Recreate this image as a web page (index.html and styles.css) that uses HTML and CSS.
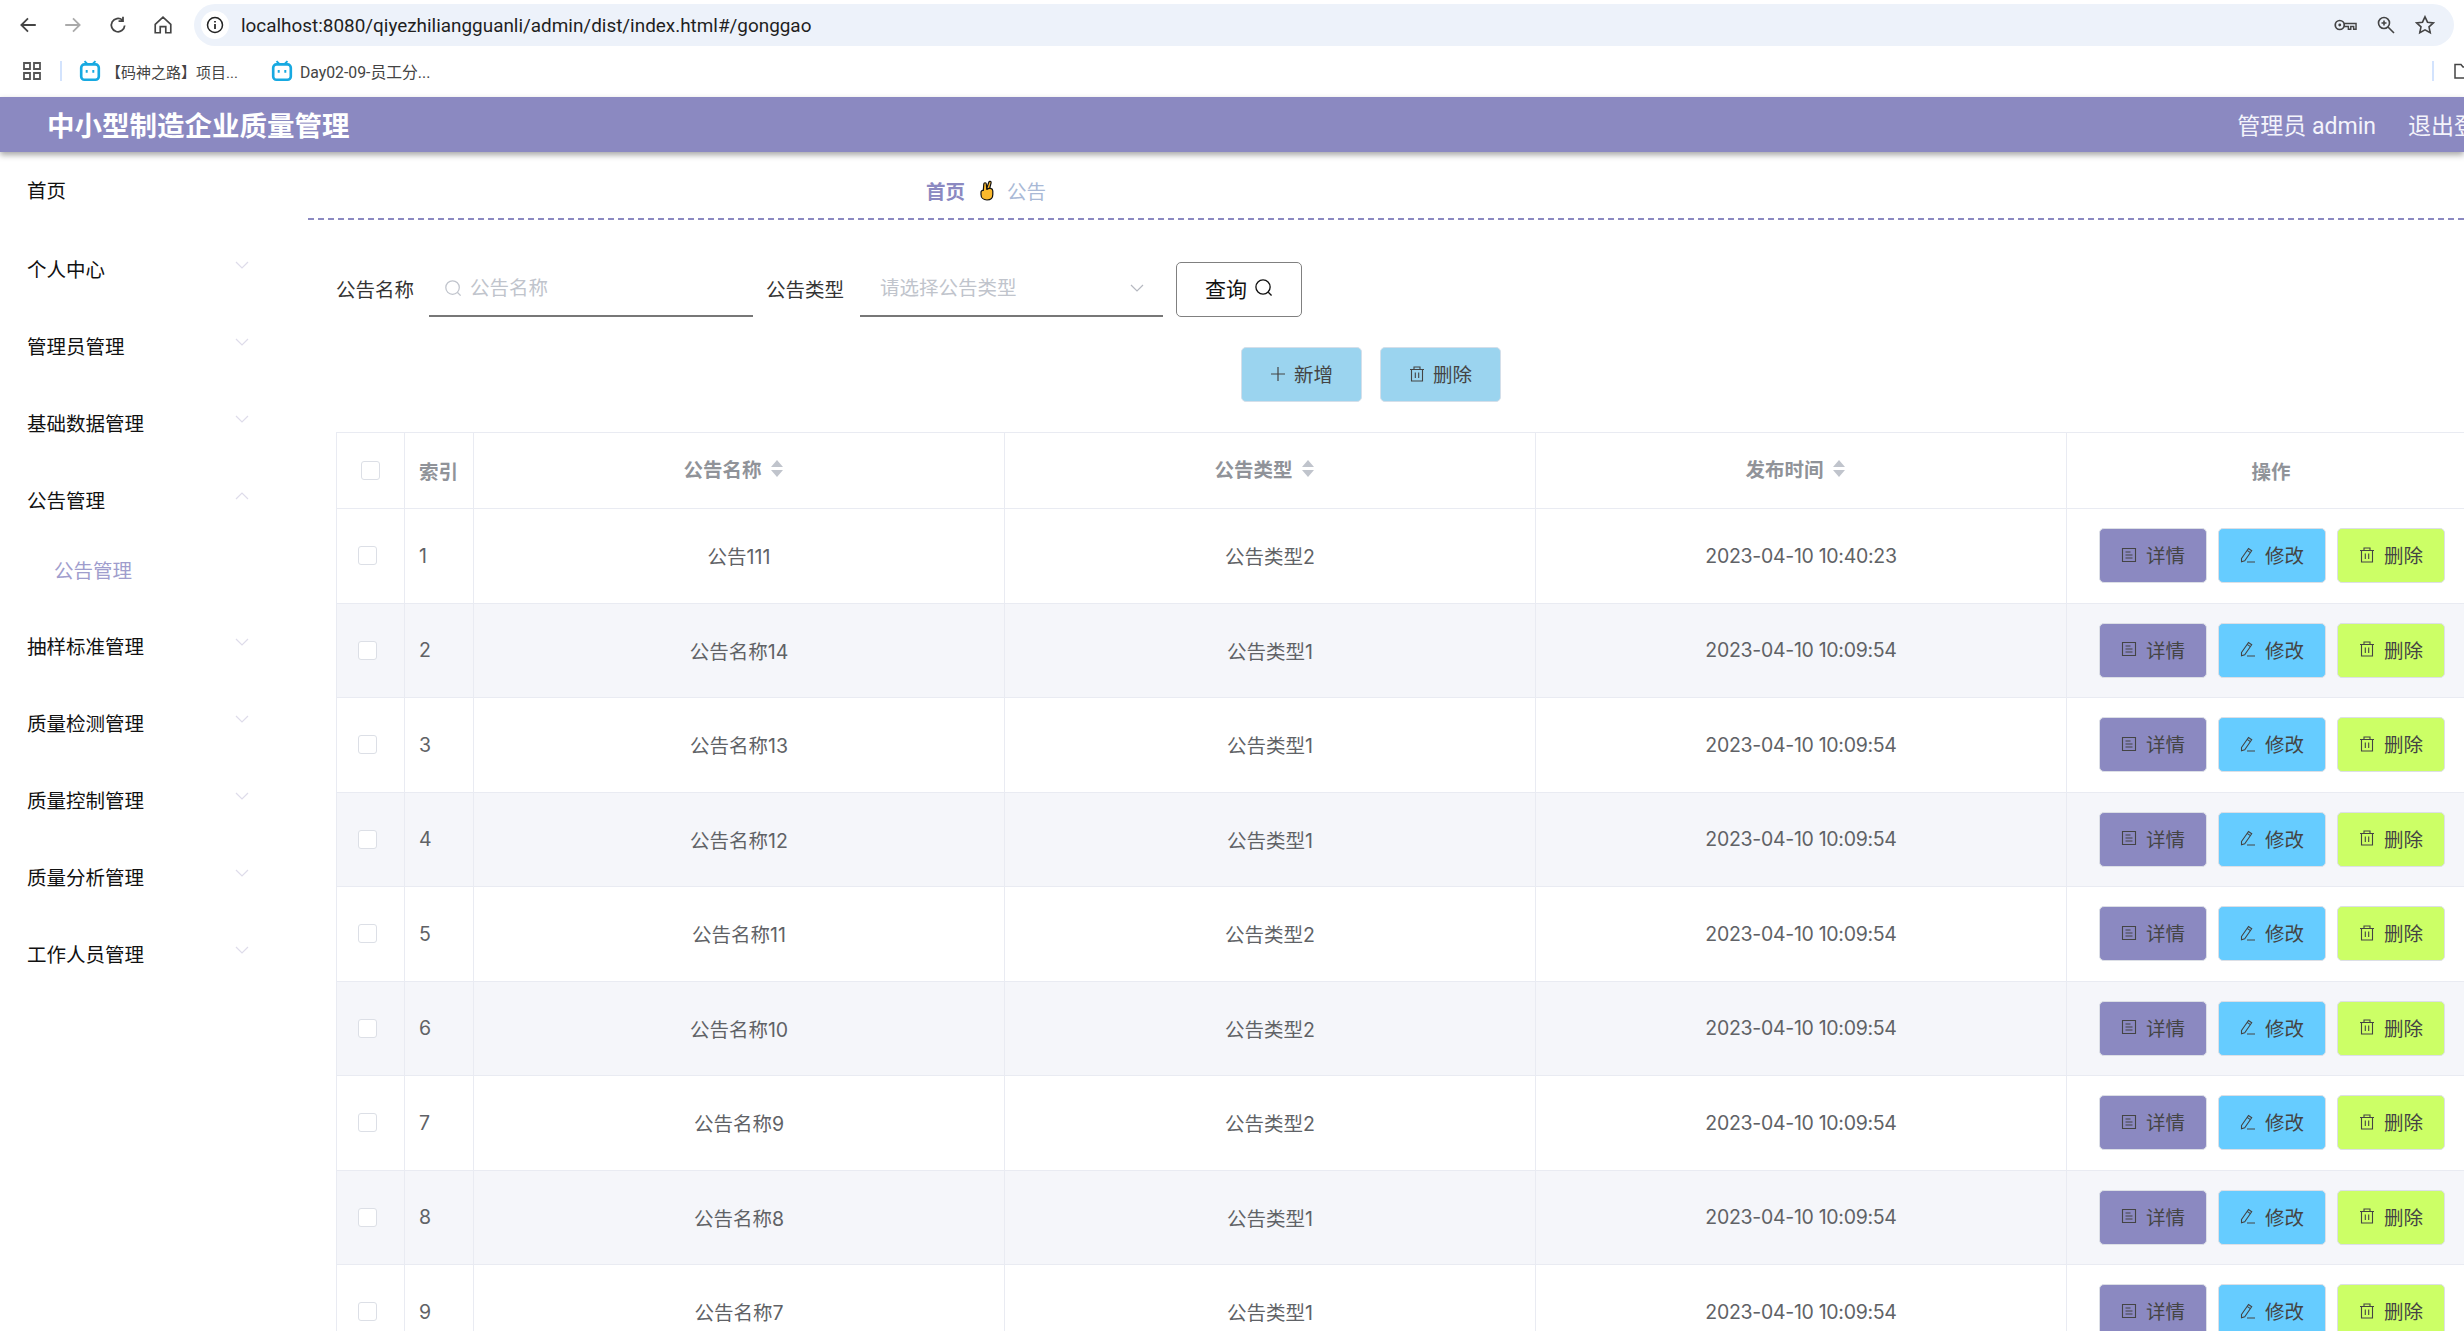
FILE: index.html
```html
<!DOCTYPE html>
<html lang="zh-CN">
<head>
  <meta charset="UTF-8">
  <title>中小型制造企业质量管理</title>
  <link rel="stylesheet" href="styles.css">
</head>
<body>
  <svg class="icon-defs" width="0" height="0">
    <symbol id="i-search" viewBox="0 0 20 20"><circle cx="9.5" cy="9.5" r="7.5" fill="none" stroke="currentColor" stroke-width="1.4"/><path d="M15 15l3.5 3.5" fill="none" stroke="currentColor" stroke-width="1.4"/></symbol>
    <symbol id="i-doc" viewBox="0 0 16 16"><path d="M1.5 1.5h13v13h-13zM4.5 5h5M4.5 8h7M4.5 11h7" fill="none" stroke="currentColor" stroke-width="1.1"/></symbol>
    <symbol id="i-edit" viewBox="0 0 16 16"><path d="M1.5 11.5L8.5 1.5l3.2 2.2-7 10-3.2 1zM7.2 3.4l3.2 2.2M7 15h8" fill="none" stroke="currentColor" stroke-width="1.1"/></symbol>
    <symbol id="i-trash" viewBox="0 0 16 16"><path d="M1 3.5h14M5 3.5V1h6v2.5M2.5 3.5V15h11V3.5M6.3 6.5v5.5M9.7 6.5v5.5" fill="none" stroke="currentColor" stroke-width="1.1"/></symbol>
    <symbol id="i-plus" viewBox="0 0 16 16"><path d="M8 1v14M1 8h14" fill="none" stroke="currentColor" stroke-width="1.2"/></symbol>
    <symbol id="i-bili" viewBox="0 0 20 20"><path d="M5 1l3 3M15 1l-3 3" stroke="#17a9e1" stroke-width="1.8" fill="none"/><rect x="2" y="4" width="16" height="14" rx="3" fill="#fff" stroke="#17a9e1" stroke-width="2.4"/><path d="M7 9v2.5M13 9v2.5" stroke="#17a9e1" stroke-width="1.8"/></symbol>
    <symbol id="i-down" viewBox="0 0 14 8"><path d="M1 1l6 6 6-6" fill="none" stroke="currentColor" stroke-width="1.2"/></symbol>
    <symbol id="i-up" viewBox="0 0 14 8"><path d="M1 7l6-6 6 6" fill="none" stroke="currentColor" stroke-width="1.2"/></symbol>
  </svg>

  <div class="browser-bar">
    <svg class="tool-icon" viewBox="0 0 18 18"><path d="M16 9H3M9 3L3 9l6 6" fill="none" stroke="#444" stroke-width="1.6"/></svg>
    <svg class="tool-icon muted" viewBox="0 0 18 18"><path d="M2 9h13M9 3l6 6-6 6" fill="none" stroke="#aaa" stroke-width="1.6"/></svg>
    <svg class="tool-icon" viewBox="0 0 18 18"><path d="M15 9.5A6 6 0 1 1 13 4.6M13.5 1.5v4h-4" fill="none" stroke="#444" stroke-width="1.6"/></svg>
    <svg class="tool-icon" viewBox="0 0 18 18"><path d="M2 8.5L9 2l7 6.500V16h-4.500v-5.500h-5V16H2z" fill="none" stroke="#444" stroke-width="1.500"/></svg>
    <div class="address">
      <span class="info-dot"><svg viewBox="0 0 18 18" width="18" height="18"><circle cx="9" cy="9" r="7.500" fill="none" stroke="#222" stroke-width="1.500"/><path d="M9 8v5M9 5v1.600" stroke="#222" stroke-width="1.700"/></svg></span>
      <span class="url">localhost:8080/qiyezhiliangguanli/admin/dist/index.html#/gonggao</span>
      <div class="address-tools">
        <svg viewBox="0 0 24 14" width="23" height="14"><circle cx="6" cy="7" r="4.700" fill="none" stroke="#444" stroke-width="1.800"/><circle cx="6" cy="7" r="1.500" fill="#444"/><path d="M10.500 5.500H23v6h-2.500V8.500h-3v3H15V8.500h-4.500" fill="none" stroke="#444" stroke-width="1.500"/></svg>
        <svg viewBox="0 0 18 18" width="18" height="18"><circle cx="7" cy="7" r="5.500" fill="none" stroke="#444" stroke-width="1.600"/><path d="M11 11l6 6M4.500 7h5M7 4.500v5" fill="none" stroke="#444" stroke-width="1.600"/></svg>
        <svg viewBox="0 0 20 20" width="20" height="20"><path d="M10 1.800l2.500 5.400 5.900.7-4.400 4 1.200 5.800-5.200-2.900-5.200 2.900L6 11.900l-4.400-4 5.900-.7z" fill="none" stroke="#444" stroke-width="1.600"/></svg>
      </div>
    </div>
  </div>

  <div class="bookmarks">
    <svg class="apps" viewBox="0 0 18 18" width="18" height="18"><path d="M1 1h6v6H1zM11 1h6v6h-6zM1 11h6v6H1zM11 11h6v6h-6z" fill="none" stroke="#555" stroke-width="1.800"/></svg>
    <span class="bm-sep"></span>
    <a class="bookmark"><svg class="bili"><use href="#i-bili"/></svg>【码神之路】项目...</a>
    <a class="bookmark"><svg class="bili"><use href="#i-bili"/></svg><span class="bm-latin">Day02-09-员工分...</span></a>
    <span class="bm-sep bm-sep-right"></span>
    <svg class="folder" viewBox="0 0 18 16" width="18" height="16"><path d="M1 1.500h6l2 2.500h8v11H1z" fill="none" stroke="#444" stroke-width="1.500"/></svg>
  </div>

  <header class="app-header">
    <div class="app-title">中小型制造企业质量管理</div>
    <div class="app-user">管理员 admin</div>
    <div class="app-logout">退出登录</div>
  </header>

  <div class="layout">
    <nav class="sidebar">
      <div class="menu-item menu-home">首页</div>
      <div class="menu-item">个人中心<svg class="chev"><use href="#i-down"/></svg></div>
      <div class="menu-item">管理员管理<svg class="chev"><use href="#i-down"/></svg></div>
      <div class="menu-item">基础数据管理<svg class="chev"><use href="#i-down"/></svg></div>
      <div class="menu-item">公告管理<svg class="chev"><use href="#i-up"/></svg></div>
      <div class="menu-sub">公告管理</div>
      <div class="menu-item">抽样标准管理<svg class="chev"><use href="#i-down"/></svg></div>
      <div class="menu-item">质量检测管理<svg class="chev"><use href="#i-down"/></svg></div>
      <div class="menu-item">质量控制管理<svg class="chev"><use href="#i-down"/></svg></div>
      <div class="menu-item">质量分析管理<svg class="chev"><use href="#i-down"/></svg></div>
      <div class="menu-item">工作人员管理<svg class="chev"><use href="#i-down"/></svg></div>
    </nav>

    <main class="main">
      <div class="crumb">
        <span class="crumb-home">首页</span>
        <svg class="crumb-hand" viewBox="0 0 14 21" width="14" height="21">
          <path d="M6.500 9L8.800 2.200C9.300.8 11.500 1.300 11.100 2.900L9.500 9z" fill="#fbb92c" stroke="#111" stroke-width="1.200" stroke-linejoin="round"/>
          <path d="M3.300 10.500L3.800 4C3.900 2.300 6.300 2.400 6.300 4L6.800 9.500C9 7.500 12.800 8 12.800 11V14.500C12.800 18 10.500 20 7 20 3.300 20 1 17.500 1 14.500V12.300C1 10.800 2.300 10.200 3.300 10.500z" fill="#fbb92c" stroke="#111" stroke-width="1.200" stroke-linejoin="round"/>
        </svg>
        <span class="crumb-cur">公告</span>
      </div>

      <div class="content">
        <form class="search">
          <label class="search-label">公告名称</label>
          <div class="field field-name">
            <svg class="field-icon"><use href="#i-search"/></svg>
            <input type="text" placeholder="公告名称">
          </div>
          <label class="search-label">公告类型</label>
          <div class="field field-type">
            <input type="text" placeholder="请选择公告类型" readonly>
            <svg class="field-chev"><use href="#i-down"/></svg>
          </div>
          <button type="button" class="btn-query">查询<svg><use href="#i-search"/></svg></button>
        </form>

        <div class="actions">
          <button type="button" class="btn-light"><svg><use href="#i-plus"/></svg>新增</button>
          <button type="button" class="btn-light"><svg><use href="#i-trash"/></svg>删除</button>
        </div>

        <table class="grid">
          <colgroup>
            <col class="col-check"><col class="col-index"><col class="col-text"><col class="col-text"><col class="col-text"><col class="col-ops">
          </colgroup>
          <thead>
            <tr>
              <th class="cell-check"><span class="check"></span></th>
              <th class="cell-index">索引</th>
              <th><div class="sortable">公告名称<span class="carets"><i class="up"></i><i class="down"></i></span></div></th>
              <th><div class="sortable">公告类型<span class="carets"><i class="up"></i><i class="down"></i></span></div></th>
              <th><div class="sortable">发布时间<span class="carets"><i class="up"></i><i class="down"></i></span></div></th>
              <th>操作</th>
            </tr>
          </thead>
          <tbody>
            <tr><td class="cell-check"><span class="check"></span></td><td class="cell-index">1</td><td>公告111</td><td>公告类型2</td><td>2023-04-10 10:40:23</td><td class="cell-ops"><div class="ops"><button type="button" class="op op-view"><svg><use href="#i-doc"/></svg>详情</button><button type="button" class="op op-edit"><svg><use href="#i-edit"/></svg>修改</button><button type="button" class="op op-del"><svg><use href="#i-trash"/></svg>删除</button></div></td></tr>
            <tr><td class="cell-check"><span class="check"></span></td><td class="cell-index">2</td><td>公告名称14</td><td>公告类型1</td><td>2023-04-10 10:09:54</td><td class="cell-ops"><div class="ops"><button type="button" class="op op-view"><svg><use href="#i-doc"/></svg>详情</button><button type="button" class="op op-edit"><svg><use href="#i-edit"/></svg>修改</button><button type="button" class="op op-del"><svg><use href="#i-trash"/></svg>删除</button></div></td></tr>
            <tr><td class="cell-check"><span class="check"></span></td><td class="cell-index">3</td><td>公告名称13</td><td>公告类型1</td><td>2023-04-10 10:09:54</td><td class="cell-ops"><div class="ops"><button type="button" class="op op-view"><svg><use href="#i-doc"/></svg>详情</button><button type="button" class="op op-edit"><svg><use href="#i-edit"/></svg>修改</button><button type="button" class="op op-del"><svg><use href="#i-trash"/></svg>删除</button></div></td></tr>
            <tr><td class="cell-check"><span class="check"></span></td><td class="cell-index">4</td><td>公告名称12</td><td>公告类型1</td><td>2023-04-10 10:09:54</td><td class="cell-ops"><div class="ops"><button type="button" class="op op-view"><svg><use href="#i-doc"/></svg>详情</button><button type="button" class="op op-edit"><svg><use href="#i-edit"/></svg>修改</button><button type="button" class="op op-del"><svg><use href="#i-trash"/></svg>删除</button></div></td></tr>
            <tr><td class="cell-check"><span class="check"></span></td><td class="cell-index">5</td><td>公告名称11</td><td>公告类型2</td><td>2023-04-10 10:09:54</td><td class="cell-ops"><div class="ops"><button type="button" class="op op-view"><svg><use href="#i-doc"/></svg>详情</button><button type="button" class="op op-edit"><svg><use href="#i-edit"/></svg>修改</button><button type="button" class="op op-del"><svg><use href="#i-trash"/></svg>删除</button></div></td></tr>
            <tr><td class="cell-check"><span class="check"></span></td><td class="cell-index">6</td><td>公告名称10</td><td>公告类型2</td><td>2023-04-10 10:09:54</td><td class="cell-ops"><div class="ops"><button type="button" class="op op-view"><svg><use href="#i-doc"/></svg>详情</button><button type="button" class="op op-edit"><svg><use href="#i-edit"/></svg>修改</button><button type="button" class="op op-del"><svg><use href="#i-trash"/></svg>删除</button></div></td></tr>
            <tr><td class="cell-check"><span class="check"></span></td><td class="cell-index">7</td><td>公告名称9</td><td>公告类型2</td><td>2023-04-10 10:09:54</td><td class="cell-ops"><div class="ops"><button type="button" class="op op-view"><svg><use href="#i-doc"/></svg>详情</button><button type="button" class="op op-edit"><svg><use href="#i-edit"/></svg>修改</button><button type="button" class="op op-del"><svg><use href="#i-trash"/></svg>删除</button></div></td></tr>
            <tr><td class="cell-check"><span class="check"></span></td><td class="cell-index">8</td><td>公告名称8</td><td>公告类型1</td><td>2023-04-10 10:09:54</td><td class="cell-ops"><div class="ops"><button type="button" class="op op-view"><svg><use href="#i-doc"/></svg>详情</button><button type="button" class="op op-edit"><svg><use href="#i-edit"/></svg>修改</button><button type="button" class="op op-del"><svg><use href="#i-trash"/></svg>删除</button></div></td></tr>
            <tr><td class="cell-check"><span class="check"></span></td><td class="cell-index">9</td><td>公告名称7</td><td>公告类型1</td><td>2023-04-10 10:09:54</td><td class="cell-ops"><div class="ops"><button type="button" class="op op-view"><svg><use href="#i-doc"/></svg>详情</button><button type="button" class="op op-edit"><svg><use href="#i-edit"/></svg>修改</button><button type="button" class="op op-del"><svg><use href="#i-trash"/></svg>删除</button></div></td></tr>
          </tbody>
        </table>
      </div>
    </main>
  </div>
</body>
</html>
```

FILE: styles.css
```css
* {
  margin: 0;
  padding: 0;
  box-sizing: border-box;
}

html, body {
  height: 1331px;
  overflow: hidden;
}

body {
  font-family: Roboto, "Noto Sans CJK SC", sans-serif;
  font-size: 19.5px;
  color: #606266;
  background: #fff;
}

button, input {
  font-family: inherit;
}

.icon-defs {
  position: absolute;
}

/* browser chrome */
.browser-bar {
  height: 49px;
  padding: 4px 10px 3px 18px;
  display: flex;
  align-items: center;
}

.tool-icon {
  width: 20px;
  height: 20px;
  margin-right: 25px;
  flex-shrink: 0;
}

.address {
  flex: 1;
  height: 42px;
  margin-left: -4px;
  padding: 0 19px 0 7px;
  border-radius: 21px;
  background: #edf2fa;
  display: flex;
  align-items: center;
}

.info-dot {
  width: 28px;
  height: 28px;
  border-radius: 50%;
  background: #fff;
  display: flex;
  align-items: center;
  justify-content: center;
}

.url {
  margin-left: 12px;
  font-size: 18.9px;
  color: #1f1f1f;
}

.address-tools {
  margin-left: auto;
  display: flex;
  align-items: center;
  gap: 20px;
}

.bookmarks {
  height: 48px;
  padding: 0 0 4px 23px;
  display: flex;
  align-items: center;
  overflow: hidden;
  font-size: 15px;
  color: #444;
}

.bm-sep {
  width: 2px;
  height: 20px;
  margin: 0 17px 0 19px;
  background: #d3e3fd;
}

.bm-sep-right {
  margin: 0 0 0 auto;
}

.folder {
  margin: 0 -8px 0 20px;
  flex-shrink: 0;
}

.bookmark {
  display: flex;
  align-items: center;
  margin-right: 33px;
}

.bm-latin {
  font-size: 15.8px;
  margin-left: 2px;
}

.bili {
  width: 22px;
  height: 22px;
  margin-right: 5px;
}

/* app header */
.app-header {
  position: relative;
  height: 55px;
  padding-left: 47px;
  display: flex;
  align-items: center;
  background: #8b89c1;
  color: #f4f4fb;
  box-shadow: 0 3px 6px rgba(0, 0, 0, 0.35);
}

.app-title {
  padding-bottom: 2px;
  font-size: 27.5px;
  font-weight: 700;
  color: #fff;
}

.app-user {
  margin-left: auto;
  padding-bottom: 2px;
  font-size: 23px;
}

.app-logout {
  margin: 0 -36px 0 32px;
  padding-bottom: 2px;
  font-size: 23px;
}

.layout {
  display: flex;
  height: 1179px;
}

/* left menu */
.sidebar {
  width: 308px;
  flex-shrink: 0;
  color: #111;
}

.menu-item {
  height: 77px;
  padding: 0 59px 2px 27px;
  display: flex;
  align-items: center;
  justify-content: space-between;
}

.menu-home {
  margin-bottom: 2px;
}

.chev {
  width: 14px;
  height: 8px;
  margin-bottom: 8px;
  color: #dedcea;
}

.menu-sub {
  height: 69px;
  padding: 0 0 8px 54px;
  display: flex;
  align-items: center;
  color: #9f9dcd;
}

/* main area */
.main {
  flex: 1;
  min-width: 0;
  overflow: hidden;
}

.crumb {
  height: 68px;
  padding: 10px 0 0 618px;
  display: flex;
  align-items: center;
  border-bottom: 2px dashed #8b89c1;
}

.crumb-home {
  font-weight: 700;
  color: #8b89c1;
}

.crumb-hand {
  margin: 0 13px 0 15px;
}

.crumb-cur {
  color: #a9b9d6;
}

.content {
  padding: 42px 58px 0 28px;
}

.search {
  display: flex;
  align-items: center;
  height: 55px;
  color: #333;
}

.search-label {
  width: 78px;
  padding-bottom: 2px;
  white-space: nowrap;
}

.field {
  height: 55px;
  padding-bottom: 1px;
  display: flex;
  align-items: center;
  border-bottom: 2px solid #777;
}

.field input {
  flex: 1;
  min-width: 0;
  border: none;
  outline: none;
  font-size: 19.5px;
  color: #606266;
  background: none;
}

.field input::placeholder {
  color: #c0c4cc;
}

.field-name {
  width: 324px;
  margin: 0 13px 0 15px;
  padding-left: 15px;
}

.field-type {
  width: 303px;
  margin: 0 13px 0 16px;
  padding: 0 19px 1px 20px;
}

.field-icon {
  width: 18px;
  height: 18px;
  margin-right: 8px;
  color: #c0c4cc;
}

.field-chev {
  width: 14px;
  height: 8px;
  color: #b5b8c0;
}

.btn-query {
  width: 126px;
  height: 55px;
  padding-bottom: 4px;
  border: 1px solid #808080;
  border-radius: 5px;
  background: #fff;
  font-size: 21px;
  color: #111;
  display: flex;
  align-items: center;
  justify-content: center;
  gap: 7px;
}

.btn-query svg {
  width: 19px;
  height: 19px;
}

.actions {
  margin-top: 30px;
  display: flex;
  justify-content: center;
  gap: 18px;
}

.btn-light {
  width: 121px;
  height: 55px;
  padding-bottom: 2px;
  border: 1px solid #d4dfea;
  border-radius: 5px;
  background: #9bd4ef;
  font-size: 19.5px;
  color: #444;
  display: flex;
  align-items: center;
  justify-content: center;
  gap: 8px;
}

.btn-light svg {
  width: 16px;
  height: 16px;
}

/* table */
.grid {
  width: 2139px;
  margin-top: 30px;
  table-layout: fixed;
  border-collapse: collapse;
  text-align: center;
}

.col-check { width: 68px; }
.col-index { width: 69px; }
.col-text { width: 531px; }
.col-ops { width: 409px; }

.grid th,
.grid td {
  border: 1px solid #e9ebf2;
}

.grid th {
  height: 76px;
  font-weight: 700;
  color: #909399;
}

.grid td {
  height: 94.5px;
  font-family: Inter, "Noto Sans CJK SC", sans-serif;
}

.grid td:nth-child(5) {
  letter-spacing: -0.3px;
}

.grid tbody tr:nth-child(even) {
  background: #f5f6fa;
}

.grid .cell-check {
  padding-left: 21px;
  text-align: left;
}

.grid th.cell-check {
  padding-left: 24px;
}

.grid .cell-index {
  padding-left: 14px;
  text-align: left;
}

.check {
  display: block;
  width: 19px;
  height: 19px;
  border: 1px solid #dcdfe6;
  border-radius: 3px;
  background: #fff;
}

.sortable {
  display: flex;
  align-items: center;
  justify-content: center;
  margin: 0 12px 4px 0;
}

.carets {
  margin-left: 9px;
  display: flex;
  flex-direction: column;
  gap: 3px;
}

.carets i {
  width: 0;
  height: 0;
  border-left: 6px solid transparent;
  border-right: 6px solid transparent;
}

.carets .up {
  border-bottom: 7px solid #c0c4cc;
}

.carets .down {
  border-top: 7px solid #c0c4cc;
}

.grid .cell-ops {
  padding-left: 32px;
}

.ops {
  display: flex;
  gap: 11px;
}

.op {
  width: 108px;
  height: 55px;
  padding-bottom: 2px;
  border: 1px solid #dcdfe6;
  border-radius: 5px;
  font-family: Roboto, "Noto Sans CJK SC", sans-serif;
  font-size: 19.5px;
  color: #444;
  display: flex;
  align-items: center;
  justify-content: center;
  gap: 9px;
}

.op svg {
  width: 16px;
  height: 16px;
}

.op-view { background: #8b89c1; }
.op-edit { background: #66ccff; }
.op-del { background: #ccff66; }
```
